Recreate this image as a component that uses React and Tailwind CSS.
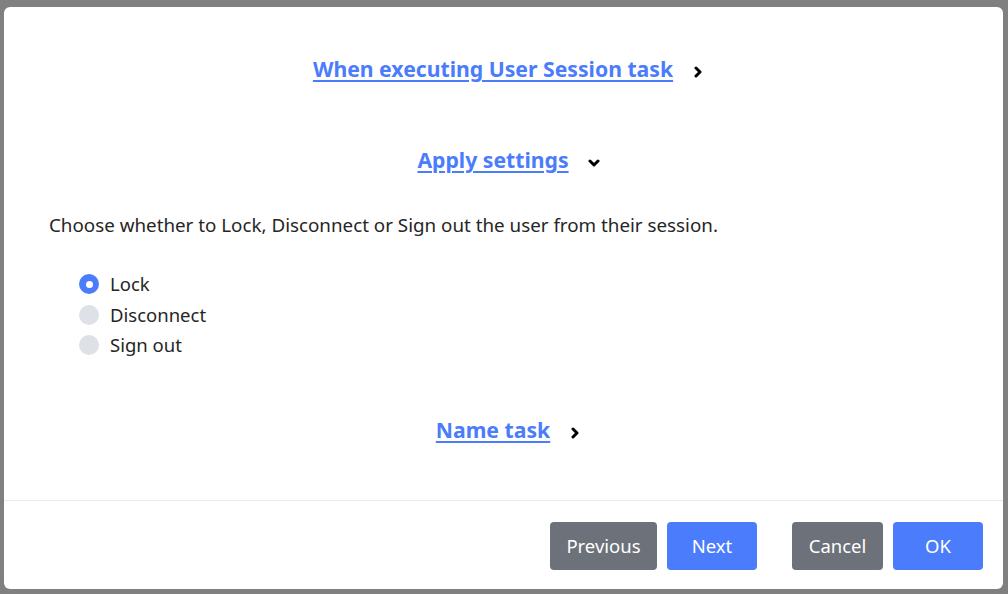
import { useState } from 'react';

const Chevron = ({ down }) => (
  <svg
    viewBox="0 0 12 12"
    className="w-[12px] h-[12px] mt-[6px]"
    fill="none"
    stroke="#000"
    strokeWidth="3"
    strokeLinecap="round"
    strokeLinejoin="round"
  >
    {down ? <path d="M2 4 L6 8 L10 4" /> : <path d="M4 2 L8 6 L4 10" />}
  </svg>
);

const Section = ({ title, open, className }) => (
  <div className={`flex items-center justify-center h-[40px] pl-[10px] ${className}`}>
    <a href="#" className="text-[21.2px] font-bold text-[#4b7cfb] underline underline-offset-[3px] decoration-[1.5px]">
      {title}
    </a>
    <span className="ml-[19px]">
      <Chevron down={open} />
    </span>
  </div>
);

const Radio = ({ checked, label, onClick }) => (
  <div className="flex items-center h-[30.5px] cursor-pointer" onClick={onClick}>
    {checked ? (
      <span className="w-[20px] h-[20px] rounded-full bg-[#4b7cfb] flex items-center justify-center">
        <span className="w-[7px] h-[7px] rounded-full bg-white" />
      </span>
    ) : (
      <span className="w-[20px] h-[20px] rounded-full bg-[#dee1e6]" />
    )}
    <span className="ml-[11px] text-[18.5px] text-[#262626]">{label}</span>
  </div>
);

const App = () => {
  const [choice, setChoice] = useState('lock');

  return (
    <div className="w-[1008px] h-[594px] bg-[#808080] pt-[7px] pl-[4px]" style={{ fontFamily: '"Noto Sans", sans-serif' }}>
      <div className="w-[999px] h-[582px] bg-white rounded-[6px] flex flex-col overflow-hidden">
        <div className="h-[493px] px-[45px]">
          <Section title="When executing User Session task" className="mt-[42px]" />
          <Section title="Apply settings" open className="mt-[51px]" />

          <p className="mt-[32px] text-[18.8px] leading-[26px] text-[#262626]">
            Choose whether to Lock, Disconnect or Sign out the user from their session.
          </p>

          {/* Radio options */}
          <div className="mt-[31px] pl-[30px]">
            <Radio label="Lock" checked={choice === 'lock'} onClick={() => setChoice('lock')} />
            <Radio label="Disconnect" checked={choice === 'disconnect'} onClick={() => setChoice('disconnect')} />
            <Radio label="Sign out" checked={choice === 'signout'} onClick={() => setChoice('signout')} />
          </div>

          <Section title="Name task" className="mt-[49px]" />
        </div>

        <div className="flex-1 border-t border-[#e8e8ee] flex items-center justify-end pr-[20px] pt-[1px]">
          <button className="w-[107px] h-[48px] rounded-[4px] bg-[#6c717a] text-white text-[18.5px]">Previous</button>
          <button className="ml-[10px] w-[90px] h-[48px] rounded-[4px] bg-[#4b7cfb] text-white text-[18.5px]">Next</button>
          <button className="ml-[35px] w-[91px] h-[48px] rounded-[4px] bg-[#6c717a] text-white text-[18.5px]">Cancel</button>
          <button className="ml-[10px] w-[90px] h-[48px] rounded-[4px] bg-[#4b7cfb] text-white text-[18.5px]">OK</button>
        </div>
      </div>
    </div>
  );
};

export default App;
